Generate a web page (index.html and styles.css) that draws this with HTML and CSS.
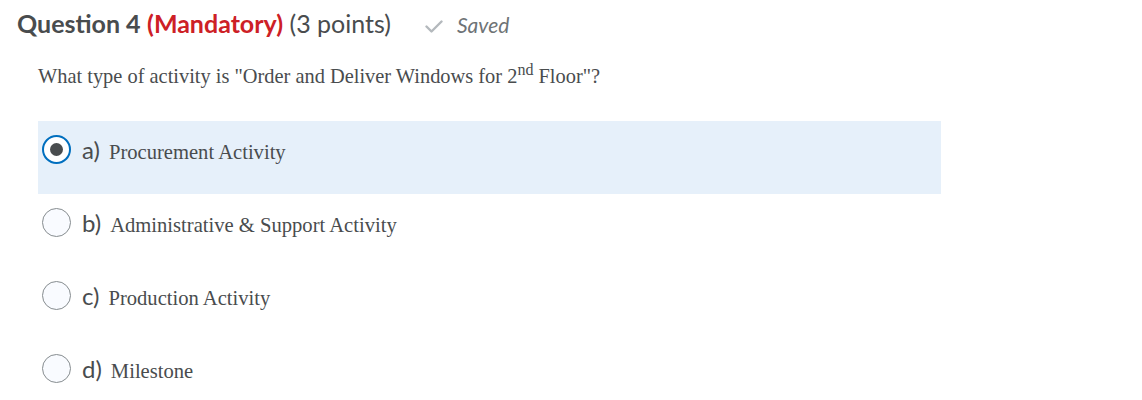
FILE: index.html
```html
<!DOCTYPE html>
<html>
<head>
<meta charset="utf-8">
<link rel="stylesheet" href="styles.css">
</head>
<body>
<div class="page">
  <div class="header">
    <h2 class="title"><span class="q">Question 4</span> <span class="mand">(Mandatory)</span> <span class="pts">(3 points)</span></h2>
    <span class="saved">
      <svg class="check" width="18" height="13" viewBox="0 0 18 13"><path d="M1.5 6.5 L6.5 11.5 L16.5 1.5" fill="none" stroke="#b4b9bd" stroke-width="2.4" stroke-linecap="round" stroke-linejoin="round"/></svg>
      <span class="saved-text">Saved</span>
    </span>
  </div>
  <p class="question">What type of activity is "Order and Deliver Windows for 2<sup>nd</sup> Floor"?</p>
  <div class="options">
    <label class="option selected">
      <span class="radio checked"><span class="dot"></span></span>
      <span class="label"><span class="letter">a)</span><span class="answer">Procurement Activity</span></span>
    </label>
    <label class="option">
      <span class="radio"></span>
      <span class="label"><span class="letter">b)</span><span class="answer">Administrative &amp; Support Activity</span></span>
    </label>
    <label class="option">
      <span class="radio"></span>
      <span class="label"><span class="letter">c)</span><span class="answer">Production Activity</span></span>
    </label>
    <label class="option">
      <span class="radio"></span>
      <span class="label"><span class="letter">d)</span><span class="answer">Milestone</span></span>
    </label>
  </div>
</div>
</body>
</html>
```
FILE: styles.css
```css
html, body {
  margin: 0;
  padding: 0;
  background: #ffffff;
}
.header {
  display: flex;
  align-items: baseline;
  padding: 8px 0 0 17px;
  height: 30px;
}
.title {
  margin: 0;
  font-family: Lato, "Liberation Sans", sans-serif;
  font-size: 25px;
  font-weight: 400;
  color: #494c4e;
  line-height: 30px;
}
.q {
  font-weight: 700;
}
.mand {
  font-weight: 700;
  color: #cd2026;
}
.saved {
  display: flex;
  align-items: baseline;
  margin-left: 34px;
  gap: 14px;
}
.check {
  display: block;
  align-self: center;
  position: relative;
  top: 1px;
}
.saved-text {
  font-family: Lato, "Liberation Sans", sans-serif;
  font-style: italic;
  font-size: 21px;
  color: #6e7376;
  line-height: 30px;
}
.question {
  margin: 26px 0 0 38px;
  font-family: "Liberation Serif", serif;
  font-size: 20.4px;
  color: #494c4e;
  line-height: 24px;
}
.question sup {
  font-size: 16px;
  line-height: 0;
  vertical-align: 8px;
}
.options {
  margin: 33px 0 0 38px;
  width: 903px;
  display: flex;
  flex-direction: column;
}
.option {
  box-sizing: border-box;
  display: flex;
  align-items: flex-start;
  height: 73px;
  padding: 14px 0 0 4px;
}
.option.selected {
  background: #e6f0fa;
}
.radio {
  box-sizing: border-box;
  width: 29px;
  height: 29px;
  border-radius: 50%;
  border: 1px solid #868c8f;
  background: #f9fbff;
  display: flex;
  align-items: center;
  justify-content: center;
  flex: none;
}
.radio.checked {
  border: 2px solid #006fbf;
  background: #ffffff;
}
.dot {
  width: 13px;
  height: 13px;
  border-radius: 50%;
  background: #494c4e;
}
.label {
  display: flex;
  align-items: baseline;
  line-height: 30px;
  margin-left: 11px;
}
.letter {
  font-family: Lato, "Liberation Sans", sans-serif;
  font-size: 24px;
  color: #494c4e;
}
.answer {
  margin-left: 9px;
  font-family: "Liberation Serif", serif;
  font-size: 20.6px;
  color: #494c4e;
}
```
